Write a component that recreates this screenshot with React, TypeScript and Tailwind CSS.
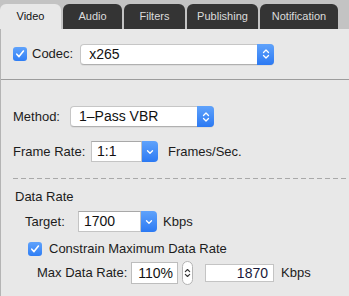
const tabs = [
  { label: 'Video', w: 'w-[61px]', active: true },
  { label: 'Audio', w: 'w-[59px]', active: false },
  { label: 'Filters', w: 'w-[61px]', active: false },
  { label: 'Publishing', w: 'w-[71px]', active: false },
  { label: 'Notification', w: 'w-[78px]', active: false },
];

function Check() {
  return (
    <span className="flex h-[14px] w-[14px] shrink-0 items-center justify-center rounded-[3px] bg-gradient-to-b from-[#5fa2fb] to-[#2f7ef5]">
      <svg width="10" height="10" viewBox="0 0 10 10">
        <path d="M1.8 5.2 L4 7.6 L8.4 2" fill="none" stroke="white" strokeWidth="1.6" strokeLinecap="round" strokeLinejoin="round" />
      </svg>
    </span>
  );
}

function UpDown({ stroke = 'white', size = 6 }: { stroke?: string; size?: number }) {
  return (
    <svg width={size + 2} height="12" viewBox="0 0 8 12">
      <path d="M1.5 4.5 L4 2 L6.5 4.5" fill="none" stroke={stroke} strokeWidth="1.3" strokeLinecap="round" strokeLinejoin="round" />
      <path d="M1.5 7.5 L4 10 L6.5 7.5" fill="none" stroke={stroke} strokeWidth="1.3" strokeLinecap="round" strokeLinejoin="round" />
    </svg>
  );
}

function Down() {
  return (
    <svg width="8" height="6" viewBox="0 0 8 6">
      <path d="M1.5 1.8 L4 4.3 L6.5 1.8" fill="none" stroke="white" strokeWidth="1.3" strokeLinecap="round" strokeLinejoin="round" />
    </svg>
  );
}

function Popup({ value, w }: { value: string; w: string }) {
  return (
    <div className={`flex h-[21px] ${w} rounded-[4px] border border-[#c6c6c6] border-b-[#b0b0b0] bg-white shadow-[0_1px_0_rgba(0,0,0,0.05)]`}>
      <div className="flex flex-1 items-center pl-[8px] text-[14px] text-[#111]">{value}</div>
      <div className="-my-px -mr-px flex w-[17px] items-center justify-center rounded-r-[4px] bg-gradient-to-b from-[#5fa2fb] to-[#2b79f3]">
        <UpDown />
      </div>
    </div>
  );
}

function Combo({ value, w }: { value: string; w: string }) {
  return (
    <div className={`flex h-[21px] ${w}`}>
      <div className="flex flex-1 items-center border border-[#c4c4c4] border-t-[#a8a8a8] bg-white pl-[5px] text-[14px] text-[#111]">
        {value}
      </div>
      <div className="flex w-[16px] items-center justify-center rounded-r-[4px] bg-gradient-to-b from-[#5fa2fb] to-[#2b79f3]">
        <Down />
      </div>
    </div>
  );
}

export default function App() {
  return (
    <div className="flex h-[296px] w-[349px] flex-col bg-[#e8e8e8] font-['Liberation_Sans',Arial,sans-serif] text-[13px] text-[#1c1c1c]">
      {/* tabs */}
      <div className="flex h-[29px] items-end gap-[2px] bg-[#c3c3c3]">
        {tabs.map((t) => (
          <div
            key={t.label}
            className={`flex h-[25px] ${t.w} items-center justify-center rounded-t-[6px] text-[11px] ${
              t.active ? 'bg-[#e8e8e8] text-[#111]' : 'bg-[#343434] text-[#dcdcdc]'
            }`}
          >
            {t.label}
          </div>
        ))}
      </div>

      <div className="flex flex-1 flex-col border-l border-[#b4b4b4]">
        {/* codec */}
        <div className="flex h-[51px] items-center border-b border-[#9c9c9c] pl-[12px]">
          <Check />
          <span className="ml-[5px]">Codec:</span>
          <div className="ml-[7px]">
            <Popup value="x265" w="w-[194px]" />
          </div>
        </div>

        {/* method */}
        <div className="flex flex-col pl-[12px] pt-[26px]">
          <div className="flex h-[21px] items-center">
            <span className="w-[57px]">Method:</span>
            <Popup value="1–Pass VBR" w="w-[144px]" />
          </div>
          <div className="mt-[14px] flex h-[21px] items-center">
            <span className="w-[78px]">Frame Rate:</span>
            <Combo value="1:1" w="w-[67px]" />
            <span className="ml-[10px]">Frames/Sec.</span>
          </div>
          <div className="mt-[16px] h-px bg-[linear-gradient(to_right,#a9a9a9_5px,transparent_5px)] bg-[length:8px_1px]" />
        </div>

        {/* data rate */}
        <div className="flex flex-col pt-[10px]">
          <div className="h-[15px] pl-[14px] leading-[15px]">Data Rate</div>
          <div className="mt-[7px] flex h-[21px] items-center pl-[24px]">
            <span className="w-[53px]">Target:</span>
            <Combo value="1700" w="w-[79px]" />
            <span className="ml-[6px]">Kbps</span>
          </div>
          <div className="mt-[10px] flex h-[14px] items-center pl-[27px]">
            <Check />
            <span className="ml-[7px]">Constrain Maximum Data Rate</span>
          </div>
          <div className="mt-[6px] flex h-[22px] items-center pl-[36px]">
            <span className="w-[94px]">Max Data Rate:</span>
            <div className="flex h-[22px] w-[47px] items-center justify-end border border-[#bdbdbd] bg-white pr-[4px] text-[14px] text-[#111]">
              110%
            </div>
            <div className="ml-[4px] flex h-[24px] w-[11px] items-center justify-center rounded-full border border-[#b4b4b4] bg-white">
              <UpDown stroke="#333" size={5} />
            </div>
            <div className="ml-[12px] flex h-[18px] w-[69px] items-center justify-end border border-[#c4c4c4] bg-white pr-[5px] text-[14px] text-[#1a1a3a]">
              1870
            </div>
            <span className="ml-[7px]">Kbps</span>
          </div>
        </div>
      </div>
    </div>
  );
}
